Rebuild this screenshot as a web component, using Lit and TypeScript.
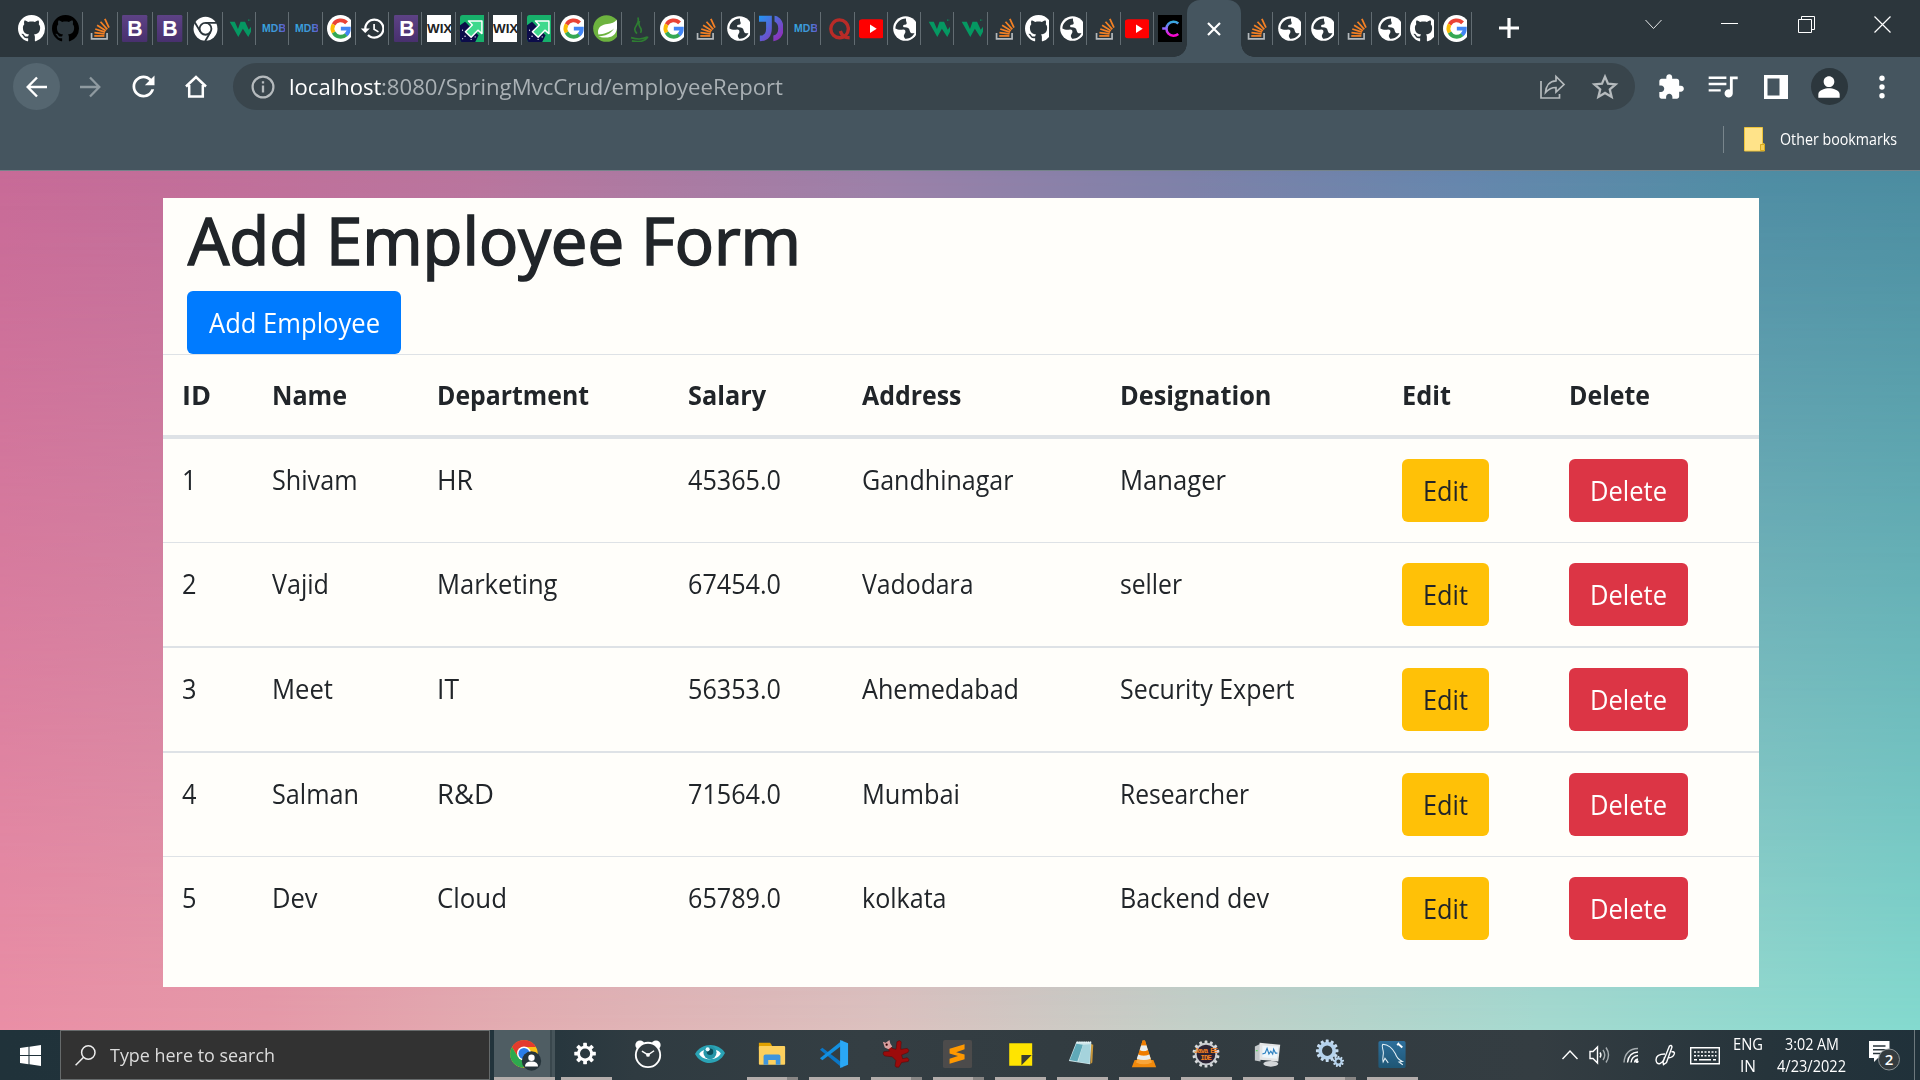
import { LitElement, html, svg, css, nothing } from "lit";
import type { TemplateResult } from "lit";
import { customElement, property } from "lit/decorators.js";

/** Text condensed or widened to an exact advance width. */
@customElement("fit-text")
class FitText extends LitElement {
  static styles = css`
    :host {
      display: inline-block;
      white-space: nowrap;
      flex: none;
    }
    .run {
      display: inline-block;
      transform-origin: 0 50%;
      white-space: pre;
    }
  `;
  @property() text = "";
  @property({ type: Number }) width = 0;

  render() {
    return html`<span class="run">${this.text}</span>`;
  }

  updated() {
    const run = this.renderRoot.querySelector(".run") as HTMLElement;
    this.style.width = `${this.width}px`;
    run.style.transform = "none";
    const natural = run.getBoundingClientRect().width;
    if (natural > 0 && this.width > 0) {
      run.style.transform = `scaleX(${this.width / natural})`;
    }
  }
}

const fit = (text: string, width: number) =>
  html`<fit-text .text=${text} .width=${width}></fit-text>`;

/* ---------- favicons, 16 x 16 ---------- */

const GITHUB =
  "M8 0C3.58 0 0 3.58 0 8c0 3.54 2.29 6.53 5.47 7.59.4.07.55-.17.55-.38 0-.19-.01-.82-.01-1.49-2.01.37-2.53-.49-2.69-.94-.09-.23-.48-.94-.82-1.13-.28-.15-.68-.52-.01-.53.63-.01 1.08.58 1.23.82.72 1.21 1.87.87 2.33.66.07-.52.28-.87.51-1.07-1.78-.2-3.64-.89-3.64-3.95 0-.87.31-1.59.82-2.15-.08-.2-.36-1.02.08-2.12 0 0 .67-.21 2.2.82.64-.18 1.32-.27 2-.27.68 0 1.36.09 2 .27 1.53-1.04 2.2-.82 2.2-.82.44 1.1.16 1.92.08 2.12.51.56.82 1.27.82 2.15 0 3.07-1.87 3.75-3.65 3.95.29.25.54.73.54 1.48 0 1.07-.01 1.93-.01 2.2 0 .21.15.46.55.38A8.013 8.013 0 0016 8c0-4.42-3.58-8-8-8z";

const favicons: Record<string, TemplateResult> = {
  github: svg`<path fill="#fff" d=${GITHUB} />`,
  githubDark: svg`<path fill="#000" d=${GITHUB} />`,
  stack: svg`
    <path fill="none" stroke="#b4b9bc" stroke-width="1" d="M2.7 10.6v3.6h9.2v-3.6" />
    <g stroke="#f48024" stroke-width="1.05" fill="none">
      <path d="M4.3 12.4h6" />
      <path d="M4.4 10.5l6 .75" />
      <path d="M4.9 8.3l5.8 1.9" />
      <path d="M6 6.1l5.2 3.2" />
      <path d="M8 4l4 4.5" />
      <path d="M10.6 2.3l2.4 5.2" />
    </g>`,
  bootstrap: svg`
    <defs><linearGradient id="bs" x1="0" y1="0" x2="0" y2="1"><stop stop-color="#5d4285" /><stop offset="1" stop-color="#48306e" /></linearGradient></defs>
    <rect width="15" height="16" rx=".8" fill="url(#bs)" />
    <text x="7.7" y="12.4" text-anchor="middle" font-family="Liberation Sans" font-weight="700" font-size="12.6" fill="#fff">B</text>`,
  chrome: svg`
    <circle cx="8" cy="8.2" r="7.1" fill="#fff" />
    <circle cx="8" cy="8.2" r="3.5" fill="none" stroke="#2c363c" stroke-width="1.1" />
    <path stroke="#2c363c" stroke-width="1.1" d="M8 4.7h6.6M5 10L1.7 4.4M11 10l-3.2 5.6" />`,
  w3: svg`
    <path fill="#059862" d="M1.600 4h3l1.900 4.300L8 4h2.700l2.200 4.800 1.400-1.900 1 1.100-2.700 5-3.200-4.800-2.700 4.800z" />
    <path stroke="#059862" stroke-width=".7" stroke-dasharray=".8 .8" d="M12.500 3h2M14.800 2.600v4.500" />`,
  mdb: svg`
    <defs><linearGradient id="md" x1="0" x2="1"><stop stop-color="#35a7e0" /><stop offset=".6" stop-color="#3f94d8" /><stop offset="1" stop-color="#6b4bc4" /></linearGradient></defs>
    <text x=".6" y="10.200" textLength="14.200" font-family="Liberation Sans" font-weight="700" font-size="6.200" fill="url(#md)">MDB</text>`,
  google: svg`
    <circle cx="8" cy="8" r="8" fill="#fff" />
    <g fill="none" stroke-width="2.3">
      <path stroke="#ea4335" d="M3.9 5.6A4.8 4.8 0 0 1 11.6 4.7" />
      <path stroke="#fbbc05" d="M3.9 10.4a4.8 4.8 0 0 1 0-4.8" />
      <path stroke="#34a853" d="M3.9 10.4a4.8 4.8 0 0 0 7.5 1.2" />
      <path stroke="#4285f4" d="M8.2 8.1h4.7a4.8 4.8 0 0 1-1.6 3.6" />
    </g>`,
  history: svg`<path fill="#fff" transform="translate(-.2 0) scale(.67)" d="M13 3c-4.97 0-9 4.03-9 9H1l3.89 3.89.07.14L9 12H6c0-3.87 3.13-7 7-7s7 3.13 7 7-3.13 7-7 7c-1.93 0-3.68-.79-4.94-2.06l-1.42 1.42C8.27 19.99 10.51 21 13 21c4.97 0 9-4.03 9-9s-4.03-9-9-9zm-1 5v5l4.28 2.54.72-1.21-3.5-2.08V8H12z" />`,
  wix: svg`
    <rect width="16" height="16" fill="#fff" />
    <text x="0" y="10.4" textLength="15" lengthAdjust="spacingAndGlyphs" font-family="Liberation Sans" font-size="7.8" font-weight="700" fill="#222">WIX</text>`,
  arrow: svg`
    <rect width="16" height="16" rx="1.6" fill="#17b06b" />
    <path fill="#0c0c4a" d="M0 6l3-2 6 6 2 2-2 4H1.5Q0 16 0 14z" />
    <path fill="#3fd98d" stroke="#fff" stroke-width=".9" stroke-linejoin="round" d="M5 3.6h8v7.4l-2.4-2-4 4.2-3.4-3.3 4.1-4z" />
    <g fill="#fff"><circle cx="1.5" cy="9" r=".35" /><circle cx="3" cy="12.6" r=".4" /><circle cx="6.6" cy="14.4" r=".4" /><circle cx="1.6" cy="14" r=".3" /><circle cx="9" cy="13" r=".35" /></g>`,
  spring: svg`
    <circle cx="8" cy="8" r="7.9" fill="#6db33f" />
    <path fill="#fff" d="M14 2.8c.9 4.5.4 10-5.200 10.500-2.500.2-4.500-.1-5.800-.5C7 12.500 11 11 12.400 8 9.800 10.400 6.400 11.200 3.200 11.600 2.100 7.600 5 5.600 8.500 5.300 11 5 12.900 4.600 14 2.800z" />`,
  java: svg`
    <path fill="none" stroke="#2e7d32" stroke-width="1" d="M6.500 11c-4-4 2.500-5 .5-9.500M8.600 10.600c2-3.300-2.500-3.500-.5-7M3 13.400c3 1 7 1 9.500-.3M3.500 15.300c4 .8 8 .3 9.500-2.500" />`,
  globe: svg`
    <circle cx="8" cy="8" r="7.300" fill="#fff" />
    <path fill="#2c363c" d="M8.300 2C4.900 2 2.100 4.600 2 8c1.500.9 3.200.8 4.600.6 1.200 0 1.500.6 1.300 1.800l-.7 1.300c-.5.9.1 1.700.6 2.300 2.700.2 4.600-1.200 5.500-3.300-1.600.4-2.600-.1-2.800-1.400-.2-1.500-1.300-2-2.900-2-.9 0-1.300-.6-.9-1.300.6-.4 1.400-.2 1.900-.7.400-.7-.3-1.300-.3-2z" />`,
  jd: svg`
    <defs><linearGradient id="jd" x1="0" y1="0" x2="1" y2="1"><stop stop-color="#2196f3" /><stop offset="1" stop-color="#a020b0" /></linearGradient></defs>
    <path fill="url(#jd)" d="M0 .5h7.600v7.300c0 5-2.600 7.700-7.100 7.700v-3.300c2.600 0 3.700-1.400 3.700-4.100V4H0zM9.200.5c3.200.4 5.400 3.600 5.400 7.500s-2.200 7.100-6.100 7.500v-3.300c2-.4 2.900-1.900 2.900-4.200 0-2-.7-3.300-2.200-4.100z" />`,
  quora: svg`<path fill="none" stroke="#b92b27" stroke-width="2" d="M8 2.900a5.200 5.300 0 1 0 .1 10.600A5.200 5.300 0 0 0 8 2.900M8.500 9.500q1 4 5.500 4" />`,
  youtube: svg`
    <rect x="-.2" y="2.500" width="15.200" height="11.300" rx="2" fill="#f00" />
    <path fill="#fff" d="M6.500 5.600v5l4-2.500z" />`,
  codeC: svg`
    <defs><linearGradient id="cc" x1="0" y1="0" x2="0" y2="1"><stop stop-color="#3ad" /><stop offset=".5" stop-color="#96f" /><stop offset="1" stop-color="#f0c" /></linearGradient></defs>
    <rect width="16" height="16" fill="#000" />
    <path fill="none" stroke="url(#cc)" stroke-width="1.500" d="M12 5A4.200 4.200 0 1 0 12 11.300M2.500 8h2" />`,
};

const wideTabs = ["github", "githubDark", "stack", "bootstrap", "bootstrap", "chrome"];
const narrowTabs = [
  "w3", "mdb", "mdb", "google", "history", "bootstrap", "wix", "arrow", "wix", "arrow",
  "google", "spring", "java", "google", "stack", "globe", "jd", "mdb", "quora", "youtube",
  "globe", "w3", "w3", "stack", "github", "globe", "stack", "youtube", "codeC",
];
const trailingTabs = ["stack", "globe", "globe", "stack", "globe", "github", "google"];

/* ---------- table data: [text, advance width] ---------- */

type Cell = [string, number];

const columns: Cell[] = [
  ["ID", 29], ["Name", 75], ["Department", 152], ["Salary", 78],
  ["Address", 99.5], ["Designation", 151.5], ["Edit", 49], ["Delete", 81],
];

const employees: Cell[][] = [
  [["1", 14.5], ["Shivam", 85.5], ["HR", 36], ["45365.0", 93], ["Gandhinagar", 151.5], ["Manager", 106]],
  [["2", 14.5], ["Vajid", 57], ["Marketing", 120.5], ["67454.0", 93], ["Vadodara", 111.5], ["seller", 62]],
  [["3", 14.5], ["Meet", 61], ["IT", 22], ["56353.0", 93], ["Ahemedabad", 157], ["Security Expert", 174.5]],
  [["4", 14.5], ["Salman", 87], ["R&D", 57], ["71564.0", 93], ["Mumbai", 98], ["Researcher", 129]],
  [["5", 14.5], ["Dev", 45.5], ["Cloud", 70], ["65789.0", 93], ["kolkata", 84.5], ["Backend dev", 149]],
];

/* ---------- taskbar icons, drawn in 32 x 32 ---------- */

const spokes = (n: number, cx: number, cy: number, r: number, w: number, color: string) =>
  Array.from({ length: n }, (_, i) =>
    svg`<rect x=${cx - w / 2} y=${cy - r} width=${w} height=${r * 0.4} rx=".5" fill=${color} transform=${`rotate(${(360 / n) * i} ${cx} ${cy})`} />`);

const apps: { icon: TemplateResult; bar: "" | "one" | "many" }[] = [
  { bar: "one", icon: svg`${spokes(8, 15, 15.5, 11.5, 4, "#fff")}<circle cx="15" cy="15.500" r="6.900" fill="none" stroke="#fff" stroke-width="3" />` },
  { bar: "", icon: svg`
    <circle cx="7.500" cy="6.500" r="5" fill="#fff" /><circle cx="24.500" cy="6.500" r="5" fill="#fff" />
    <circle cx="16" cy="17" r="13" fill="#323c41" stroke="#fff" stroke-width="2" />
    <path stroke="#fff" stroke-width="1.500" fill="none" d="M9.500 13l6.500 4 6.500-4.500" /><circle cx="16" cy="17" r="2" fill="#fff" />` },
  { bar: "", icon: svg`
    <path fill="#2aa3b5" d="M0 16C7 3.500 25 3.500 32 15 25 29 7 29 0 16z" />
    <path fill="#fff" d="M4.500 16C8 9 24 9 27.500 15.500 24 23.500 8 23.500 4.500 16z" />
    <circle cx="16" cy="14.500" r="7" fill="#2596a8" /><circle cx="16" cy="13.500" r="3.500" fill="#0b4d59" /><circle cx="13.500" cy="11" r="2.200" fill="#e8fbff" />` },
  { bar: "many", icon: svg`
    <path fill="#e0a100" d="M2 4h12l2 3v5H2z" /><rect x="2" y="7.500" width="28" height="20" rx="1" fill="#fdd05e" />
    <path fill="#3f95dc" d="M7 27.500V18.500q0-2 2-2h14q2 0 2 2v9h-5v-5h-8v5z" />` },
  { bar: "one", icon: svg`
    <path fill="#0a76c6" d="M1 11.500l2.600-2.200L25 25.500v5.300z" /><path fill="#1390e0" d="M1 20.500l2.600 2.200L25 6.500V1.200z" />
    <path fill="#2aa7f5" d="M22.500 1L31 4.500v23L22.500 31z" />` },
  { bar: "many", icon: svg`
    <path fill="#9c0b0b" stroke="#5f0505" stroke-width=".6" d="M4 4l5 2 3 4 4 1 1-8q3-2.500 4.500 0l-.5 8 7-1q3 2 .5 4.500L22 17l1 4 5-1q3 2 1 4l-7 1-3 5q-4 1-4-2l1-5-4-4-8-1q-3-2-1-4.500l6-.5z" />
    <path fill="#d9a0a0" d="M2 3l3 1 4-3 1 4 2 3-4 3-4-2z" /><circle cx="6" cy="6" r="1.200" fill="#300" />` },
  { bar: "many", icon: svg`
    <rect x="0" y="1" width="31" height="30" rx="2" fill="#4c4b4b" />
    <path fill="#ff9800" d="M7 10.500L23 5.500v5.500l-9 3 9 2.600v4.900L7 26.500V21l9-3-9-2.500z" />` },
  { bar: "one", icon: svg`<path fill="#ffe400" d="M4.500 4.500h24.500v12.500L17.500 28.500h-13z" /><path fill="#ffe400" d="M29 16v12.500H17z" /><path fill="#3a3d30" d="M17.500 28V17h11z" />` },
  { bar: "one", icon: svg`
    <path fill="#c9973a" d="M25 5l3 1-1 19-2 2z" /><path fill="#cfe6ea" d="M10 3h16l-1.500 24L2 23.500z" />
    <path fill="#5fa9b8" d="M10 5l7 1-6 18-8-1.500z" /><path fill="#a5d3dc" d="M17 6l8-.5L24 26l-12-1.800z" />
    <path stroke="#eef8fa" stroke-width="1.500" stroke-dasharray="1 1" d="M10.500 3.500h15.500" />` },
  { bar: "one", icon: svg`
    <path fill="#f18a0c" d="M6 22.500h20l3 7.500H3z" /><path fill="#f9a63a" d="M14.500 1.500h2.500L24.500 25q-8.500 4-17 0z" />
    <path fill="#ef7d00" d="M14.500 1.500h2.500l1.700 5.500h-5.800z" /><path fill="#e8eef0" d="M12.900 7h5.800l1.500 5q-4.500 2-8.900 0z" />
    <path fill="#ef7d00" d="M11.300 12q4.400 2 8.900 0l1.500 4.500q-5.900 2.500-11.900 0z" /><path fill="#e8eef0" d="M9.800 16.500q6 2.500 11.900 0l1.500 4.500q-7.400 3-14.900 0z" />` },
  { bar: "one", icon: svg`
    ${spokes(14, 16, 16, 14.5, 3, "#d7d9db")}<circle cx="16" cy="16" r="11" fill="#2b2233" stroke="#c8ccd0" stroke-width="2" />
    <text x="16" y="15" text-anchor="middle" textLength="25" font-family="Liberation Mono" font-weight="700" font-size="7.500" fill="#f58220">Java EE</text>
    <text x="16" y="22" text-anchor="middle" textLength="12" font-family="Liberation Mono" font-weight="700" font-size="7.500" fill="#f58220">IDE</text>` },
  { bar: "one", icon: svg`
    <path fill="#c3c7c9" d="M2 8l6-3v19l-6-1z" /><path fill="#e3e5e6" d="M7 4l22 2-2 18-20-2z" /><path fill="#eef6fb" d="M10 7l17 1-1.500 13L10 19.500z" />
    <path stroke="#2a7fc0" fill="none" stroke-width="1.200" d="M10 16l3-1 2-5 2 6 2-3 2 3 1-5 2 4h2" /><ellipse cx="19" cy="26.500" rx="8" ry="3" fill="#d4d7d9" /><path fill="#4d4" d="M3 12h2v1H3z" />` },
  { bar: "many", icon: svg`
    ${spokes(12, 13, 12.5, 12, 3.2, "#c5dbef")}<circle cx="13" cy="12.500" r="7.500" fill="none" stroke="#b5d2ec" stroke-width="4" />
    ${spokes(9, 25, 24, 6, 2, "#c5dbef")}<circle cx="25" cy="24" r="3.300" fill="none" stroke="#b5d2ec" stroke-width="2.200" />` },
  { bar: "one", icon: svg`
    <defs><linearGradient id="my" x1="0" y1="0" x2="0" y2="1"><stop stop-color="#2d6f9c" /><stop offset="1" stop-color="#1f5674" /></linearGradient></defs>
    <rect x="1.500" y="2" width="29" height="29" rx="2" fill="url(#my)" />
    <path fill="none" stroke="#e4f0f6" stroke-width="1.100" d="M6 5.500c6 .5 10.500 4 13.500 10 1.500 4.500 3 6.500 7.500 8.500l-3.500.5 4 3M6 5.500c-1.500 3 1 6 .8 9.500-.2 3.500-1.300 6-.3 9.500l2-4 3.500 5" />
    <path stroke="#fff" stroke-width="2" d="M22 4.500l5 4.500M21.500 6.500l2-2" />` },
];

@customElement("app-root")
class AppRoot extends LitElement {
  static styles = css`
    :host {
      display: flex;
      flex-direction: column;
      width: 1920px;
      height: 1080px;
      overflow: hidden;
      font-family: "Open Sans", "Noto Sans", sans-serif;
      color: #212529;
    }
    * { box-sizing: border-box; }
    svg { display: block; flex: none; overflow: visible; }

    /* tab strip */
    .strip {
      display: flex;
      height: 57px;
      flex: none;
      padding-left: 13.6px;
      background: #2c363c;
      align-items: stretch;
    }
    .tab {
      flex: none;
      width: 33.26px;
      height: 33px;
      margin-top: 12px;
      padding: 3px 0 0 4.4px;
      border-right: 1.5px solid #626c72;
    }
    .tab.wide { width: 34.900px; padding-left: 4px; }
    .tab.last { border-color: transparent; width: 33px; }
    .clip { width: 24px; height: 27px; overflow: hidden; }
    .wide .clip { width: 27px; }
    .active {
      flex: none;
      width: 54px;
      height: 57px;
      background: #45555f;
      border-radius: 13px 13px 0 0;
      display: flex;
      align-items: center;
      justify-content: center;
      position: relative;
      margin-right: -1.500px;
    }
    .active::before,
    .active::after {
      content: "";
      position: absolute;
      bottom: 0;
      width: 13px;
      height: 13px;
    }
    .active::before { left: -13px; background: radial-gradient(circle at 0 0, transparent 12.500px, #45555f 13px); }
    .active::after { right: -13px; background: radial-gradient(circle at 100% 0, transparent 12.500px, #45555f 13px); }
    .newtab { margin: 18px 0 0 27px; }
    .winctl { display: flex; margin-left: auto; padding: 16px 29px 0 0; gap: 59.400px; }

    /* toolbar */
    .toolbar {
      flex: none;
      height: 114px;
      background: #45555f;
      border-bottom: 1px solid #75838a;
    }
    .nav { display: flex; align-items: center; height: 47px; margin-top: 6px; }
    .back {
      width: 47px; height: 47px; margin-left: 13px; border-radius: 50%;
      background: #556670; display: flex; align-items: center; justify-content: center;
    }
    .nav .fwd { margin-left: 16.500px; }
    .nav .reload { margin-left: 24px; }
    .nav .home { margin-left: 24px; }
    .url {
      flex: none;
      display: flex;
      align-items: center;
      width: 1402px;
      height: 47px;
      margin-left: 25px;
      padding-left: 18px;
      border-radius: 24px;
      background: #39454c;
      font-size: 22px;
      line-height: 30px;
      color: #fff;
    }
    .url fit-text { padding-bottom: 2px; }
    .info { margin-right: 14px; }
    .path { color: #a9b0b4; }
    .share { margin-left: auto; margin-right: 27px; }
    .star { margin-right: 17px; }
    .ext { display: flex; align-items: center; padding-left: 22px; }
    .queue { margin-left: 18px; }
    .panel { margin-left: 27px; }
    .avatar {
      width: 37px; height: 37px; border-radius: 50%; background: #2c373d;
      display: flex; align-items: center; justify-content: center;
      margin: 0 31px 0 23px;
    }
    .bookmarks {
      display: flex;
      align-items: center;
      height: 27px;
      margin-top: 16px;
      justify-content: flex-end;
      padding-right: 23px;
      font-size: 15.500px;
      color: #fff;
    }
    .bookmarks fit-text { padding-bottom: 2px; }
    .rule { width: 1px; height: 27px; background: #78858c; margin-right: 20px; }
    .folder { margin-right: 15px; }

    /* page */
    .page {
      flex: none;
      height: 859px;
      display: grid;
      background: linear-gradient(90deg, #ea8fa6 0%, #e69aa9 14%, #e3aeb2 27%, #dcc2bf 46%, #c4d0c8 62%, #a6dad0 80%, #84dacf 100%);
    }
    .wash, .canvas { grid-area: 1 / 1; }
    .wash {
      background: linear-gradient(90deg, #c76a97 0%, #b8749d 25%, #9a7fa8 46%, #7c80a8 62%, #6585ac 76%, #4e8ca3 92%, #4b8ca0 100%);
      -webkit-mask-image: linear-gradient(#000, transparent);
      mask-image: linear-gradient(#000, transparent);
    }
    .canvas { padding: 27px 0 0 163px; z-index: 1; }
    .card { width: 1596px; height: 789px; background: #fffefa; }
    h1 {
      margin: 0 0 11px;
      padding-left: 25px;
      font-size: 66px;
      font-weight: 400;
      line-height: 82px;
      -webkit-text-stroke: 1.700px #212529;
    }
    .btn {
      display: flex;
      align-items: center;
      justify-content: center;
      height: 63px;
      border-radius: 6px;
      font-size: 26.600px;
      line-height: 40px;
      padding-top: 1px;
    }
    .add { width: 214px; margin-left: 24px; background: #007bff; color: #fff; }
    .edit { width: 87px; background: #ffc107; color: #212529; }
    .delete { width: 119px; background: #dc3545; color: #fff; }
    .row {
      display: grid;
      grid-template-columns: 90.500px 164.500px 251.500px 173.500px 258px 282.500px 167px 1fr;
      padding: 20px 0 20px 18.500px;
      font-size: 26.600px;
      line-height: 40px;
      border-top: 1px solid #dee2e6;
    }
    .row.first { border-top: 0; }
    .row.double { border-top-width: 2px; }
    .row.head { font-weight: 700; border-bottom: 4px solid #dee2e6; }
    .cell { height: 40px; }
    .body .cell { height: 63px; }
    .body .value { padding-top: 1px; }

    /* taskbar */
    .taskbar {
      flex: none;
      display: flex;
      height: 50px;
      background: linear-gradient(90deg, #20323a 0%, #22343c 26%, #2f3b41 33%, #343e43 45%, #313b40 60%, #343d42 80%, #26343b 92%, #20313a 100%);
      color: #fff;
    }
    .start { width: 60px; display: flex; align-items: center; justify-content: center; }
    .search {
      width: 430px;
      height: 50px;
      border: 1px solid #666a6b;
      background: #323232;
      display: flex;
      align-items: center;
      padding-left: 14px;
      font-size: 18.300px;
      line-height: 26px;
      color: #dcdcdc;
    }
    .search svg { margin-right: 14px; }
    .app {
      width: 62px;
      height: 50px;
      display: flex;
      flex-direction: column;
      align-items: center;
      padding-top: 9px;
    }
    .app .bar { width: 51px; height: 3px; margin-top: 8px; background: #b3adab; }
    .app .bar.many { background: linear-gradient(90deg, #b3adab 40.500px, #888685 40.500px); }
    .app.current {
      width: 61px;
      margin: 0 0 0 4px;
      background: linear-gradient(90deg, #4f5d63 56px, #39474d 56px, #39474d 57.500px, #46545a 57.500px);
    }
    .app.current .bar { width: 61px; }
    .tray { display: flex; align-items: center; margin-left: auto; }
    .stack { display: flex; flex-direction: column; align-items: center; font-size: 16.300px; line-height: 22px; }
    .lang { margin: 0 14px 0 13px; }
    .note { margin: 0 13px 0 23px; }
    .peek { width: 6px; height: 50px; border-left: 1px solid #6d787d; }
  `;

  private favicon(name: string) {
    return html`<div class="clip"><svg width="27" height="27" viewBox="0 0 16 16">${favicons[name]}</svg></div>`;
  }

  private tab(name: string, kind = "") {
    return html`<div class="tab ${kind}">${this.favicon(name)}</div>`;
  }

  private renderStrip() {
    return html`
      <div class="strip">
        ${wideTabs.map((n) => this.tab(n, "wide"))}
        ${narrowTabs.map((n, i) => this.tab(n, i === narrowTabs.length - 1 ? "last" : ""))}
        <div class="active">
          <svg width="14" height="14" viewBox="0 0 14 14"><path d="M1 1l12 12M13 1L1 13" stroke="#fff" stroke-width="2.200" /></svg>
        </div>
        ${trailingTabs.map((n) => this.tab(n))}
        <svg class="newtab" width="20" height="20" viewBox="0 0 20 20"><path d="M10 0v20M0 10h20" stroke="#fff" stroke-width="3.200" /></svg>
        <div class="winctl">
          <svg width="17" height="17"><path d="M.5 4l8 8.500 8-8.500" fill="none" stroke="#e6e8e9" /></svg>
          <svg width="17" height="17"><path d="M0 7.500h17" stroke="#fff" /></svg>
          <svg width="17" height="17"><path d="M.5 3.500h13v13H.5zM3.500 3.500v-3h13v13h-3" fill="none" stroke="#fff" /></svg>
          <svg width="17" height="17"><path d="M.5 .5l16 16M16.500 .5l-16 16" stroke="#fff" stroke-width="1.200" /></svg>
        </div>
      </div>`;
  }

  private renderToolbar() {
    return html`
      <div class="toolbar">
        <div class="nav">
          <div class="back"><svg width="22" height="22" viewBox="0 0 22 22"><path d="M21 11H2M11 1.500L1.700 11l9.300 9.500" fill="none" stroke="#fff" stroke-width="2.400" /></svg></div>
          <svg class="fwd" width="26" height="22" viewBox="-2 0 26 22"><path d="M1 11h19M11 1.500l9.300 9.500-9.300 9.500" fill="none" stroke="#8f9aa0" stroke-width="2.300" /></svg>
          <svg class="reload" width="33" height="33" viewBox="0 0 24 24"><path fill="#fff" d="M17.650 6.350C16.200 4.900 14.210 4 12 4c-4.420 0-7.990 3.580-7.990 8s3.570 8 7.990 8c3.730 0 6.840-2.550 7.730-6h-2.080c-.82 2.330-3.040 4-5.650 4-3.310 0-6-2.690-6-6s2.690-6 6-6c1.660 0 3.140.69 4.220 1.780L13 11h7V4l-2.350 2.350z" /></svg>
          <svg class="home" width="24" height="23" viewBox="0 0 24 23"><path d="M2 11.500L12 2l10 9.500M5.200 10v11.500h13.600V10" fill="none" stroke="#fff" stroke-width="2.500" /></svg>
          <div class="url">
            <svg class="info" width="24" height="24" viewBox="0 0 24 24"><circle cx="12" cy="12" r="10.400" fill="none" stroke="#b5babd" stroke-width="2.200" /><path d="M12 10.500v7M12 6.200v2.400" stroke="#b5babd" stroke-width="2.300" /></svg>
            ${fit("localhost", 92.5)}<span class="path">${fit(":8080/SpringMvcCrud/employeeReport", 402)}</span>
            <svg class="share" width="25" height="24" viewBox="0 0 25 24"><g fill="none" stroke="#b5babd" stroke-width="1.700"><path d="M1 6v17h18.500v-4" /><path d="M5.500 17.500C6 11 9.500 6 16 5.800V1.500L24 9.500l-8 7.500v-4.500c-4.500 0-7.500 1.500-10.500 5z" /></g></svg>
            <svg class="star" width="26" height="25" viewBox="0 0 26 25"><path d="M13 2.600l3 7.100 7.600.7-5.800 5 1.800 7.500L13 18.900l-6.600 4 1.800-7.500-5.800-5 7.600-.7z" fill="none" stroke="#b5babd" stroke-width="2.300" /></svg>
          </div>
          <div class="ext">
            <svg width="28" height="28" viewBox="0 0 24 24"><path fill="#fff" d="M20.500 11H19V7c0-1.100-.9-2-2-2h-4V3.500C13 2.120 11.880 1 10.500 1S8 2.120 8 3.500V5H4c-1.100 0-1.990.9-1.990 2v3.800H3.500c1.490 0 2.700 1.210 2.700 2.700s-1.210 2.700-2.700 2.700H2V20c0 1.100.9 2 2 2h3.800v-1.500c0-1.490 1.210-2.700 2.700-2.700 1.490 0 2.700 1.210 2.700 2.700V22H17c1.100 0 2-.9 2-2v-4h1.500c1.380 0 2.500-1.120 2.500-2.500S21.880 11 20.500 11z" /></svg>
            <svg class="queue" width="34" height="34" viewBox="-14.500 0.500 24 24"><path transform="translate(-2)" fill="#fff" d="M4 5H-8.500v1.800H4zM4 9.500H-8.500v1.800H4zM-8.500 15.700H0v-1.700h-8.500zM6.500 5v9.200a2.900 2.900 0 1 0 2 2.800V7H12V5z" /></svg>
            <svg class="panel" width="24" height="24" viewBox="0 0 24 24"><path fill="#fff" fill-rule="evenodd" d="M0 0h24v24H0zM3.500 3.500v17h12v-17z" /></svg>
            <div class="avatar"><svg width="32" height="32" viewBox="0 0 24 24"><path fill="#fff" d="M12 12c2.210 0 4-1.790 4-4s-1.790-4-4-4-4 1.790-4 4 1.790 4 4 4zm0 1c-2.670 0-8 1.340-8 4.500V20h16v-2.500c0-3.160-5.330-4.500-8-4.500z" /></svg></div>
            <svg width="6" height="24" viewBox="0 0 6 24"><g fill="#fff"><circle cx="3" cy="3.200" r="2.700" /><circle cx="3" cy="12" r="2.700" /><circle cx="3" cy="20.700" r="2.700" /></g></svg>
          </div>
        </div>
        <div class="bookmarks">
          <div class="rule"></div>
          <svg class="folder" width="21" height="25" viewBox="0 0 21 25"><path d="M.5 .5h18v16l2 .5v7H.5z" fill="#ffe389" stroke="#eec43a" /><path d="M16.500 23.500v-6h4v6z" fill="#f6cf55" stroke="#d9aa1e" /></svg>
          ${fit("Other bookmarks", 117)}
        </div>
      </div>`;
  }

  private renderRow(cells: Cell[], i: number) {
    const kind = i === 0 ? "first" : i === 2 || i === 3 ? "double" : "";
    return html`
      <div class="row body ${kind}">
        ${cells.map(([t, w]) => html`<div class="cell value">${fit(t, w)}</div>`)}
        <div class="cell"><div class="btn edit">${fit("Edit", 45)}</div></div>
        <div class="cell"><div class="btn delete">${fit("Delete", 77)}</div></div>
      </div>`;
  }

  private renderTaskbar() {
    return html`
      <div class="taskbar">
        <div class="start">
          <svg width="21" height="21" viewBox="0 0 21 21"><path fill="#fff" d="M0 3l8.500-1.200V10H0zM9.500 1.700L21 0v10H9.500zM0 11h8.500v8.200L0 18zM9.500 11H21v10L9.500 19.300z" /></svg>
        </div>
        <div class="search">
          <svg width="21" height="21" viewBox="0 0 21 21"><g fill="none" stroke="#eee" stroke-width="1.500"><circle cx="13.300" cy="7.500" r="6.700" /><path d="M8.600 12.300L.6 20.300" /></g></svg>
          ${fit("Type here to search", 165)}
        </div>
        <div class="app current">
          <svg width="30" height="30" viewBox="0 0 30 30">
            <circle cx="14" cy="15" r="13.800" fill="#fbc116" />
            <path fill="#e33b2e" d="M2 8A13.800 13.800 0 0 1 26 8H14L8 18z" />
            <path fill="#2da94f" d="M2 8A13.800 13.800 0 0 0 13 28.800L20 18H8z" />
            <circle cx="14" cy="14.500" r="7" fill="#fff" /><circle cx="14" cy="14.500" r="5.500" fill="#2a7de9" />
            <circle cx="21.500" cy="22" r="9.700" fill="#26343b" /><circle cx="21.500" cy="18.800" r="3.200" fill="#fff" /><path fill="#fff" d="M15 27.500q0-5 6.500-5t6.500 5z" />
          </svg>
          <div class="bar"></div>
        </div>
        ${apps.map(({ icon, bar }) => html`
          <div class="app">
            <svg width="30" height="30" viewBox="0 0 32 32">${icon}</svg>
            ${bar ? html`<div class="bar ${bar}"></div>` : nothing}
          </div>`)}
        <div class="tray">
          <svg width="158" height="30" viewBox="1562 1040 158 30">
            <g fill="none" stroke="#fff" stroke-width="1.400">
              <path d="M1562.500 1059l7.500-8 7.500 8" />
              <path d="M1590 1051.500h3l4.500-4.500v16l-4.500-4.500h-3zM1600 1052.500q1.800 2.500 0 5" />
              <path stroke="#a6adb0" d="M1603 1050q3.500 5 0 10M1606 1047.500q5 7.500 0 15" />
              <path d="M1624 1062.500q1-13.500 14-14" stroke="#a6adb0" /><path d="M1627.500 1062.500q1-10 10.500-10.500M1631 1062.500q.8-6.500 7-7M1634.500 1062.500q.5-3 3.500-3.500" />
              <path d="M1663 1062l6.500-16q2-1.500 2.500 1l-5.500 15.500-3 2zM1665 1054q-9 0-9 6 .5 4.500 4 3.500 4-2 4.500-6.500M1668 1058q6-.5 6.500-5-1-2-3-1" />
              <path d="M1690.700 1047.700h28.600v16h-28.600z" />
              <path stroke-dasharray="2 1.500" d="M1694 1052h22.500M1694 1055.700h22.500" /><path d="M1694 1059.700h3M1699 1059.700h12M1713 1059.700h3" />
            </g>
            <circle cx="1637" cy="1061.500" r="1.600" fill="#fff" />
          </svg>
          <div class="stack lang">${fit("ENG", 30)}${fit("IN", 16)}</div>
          <div class="stack clock">${fit("3:02 AM", 54)}${fit("4/23/2022", 69)}</div>
          <svg class="note" width="32" height="32" viewBox="0 0 32 32">
            <path fill="#fff" d="M0 2h20.500v17H9l-4 4v-4H0z" /><path stroke="#2a363c" stroke-width="1.500" d="M4 7h12.500M4 10.700h12.500M4 14.500h8" />
            <circle cx="20" cy="20.500" r="10.500" fill="#343b3f" stroke="#8a9194" />
            <text x="20" y="26" text-anchor="middle" font-family="Open Sans" font-weight="600" font-size="15" fill="#fff">2</text>
          </svg>
          <div class="peek"></div>
        </div>
      </div>`;
  }

  render() {
    return html`
      ${this.renderStrip()}
      ${this.renderToolbar()}
      <div class="page">
        <div class="wash"></div>
        <div class="canvas">
          <div class="card">
            <h1>${fit("Add Employee Form", 613)}</h1>
            <div class="btn add">${fit("Add Employee", 171)}</div>
            <div class="row head">${columns.map(([t, w]) => html`<div class="cell">${fit(t, w)}</div>`)}</div>
            ${employees.map((e, i) => this.renderRow(e, i))}
          </div>
        </div>
      </div>
      ${this.renderTaskbar()}`;
  }
}
